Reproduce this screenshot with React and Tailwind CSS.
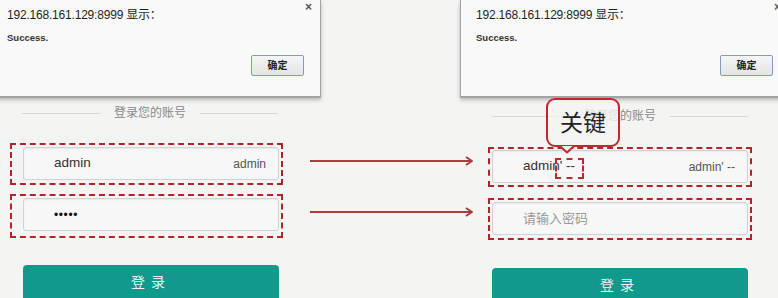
import React from "react";

const FONT = { fontFamily: '"Liberation Sans", "Noto Sans CJK SC", sans-serif' };

function Dialog({ className }) {
  return (
    <div
      className={
        "absolute top-0 w-[330px] h-[98px] bg-[#f9f9f9] border border-t-0 border-b-2 border-[#a3a3a3] shadow-[0_2px_4px_rgba(0,0,0,0.25)] " +
        className
      }
    >
      <div className="flex justify-between pl-[15px] pr-[8px]">
        <div className="pt-[7px] text-[12px] leading-[16px] text-[#1e1e1e] tracking-[-0.2px]">
          192.168.161.129:8999 显示：
        </div>
        <div className="pt-[1px] text-[12px] font-bold text-[#555] leading-[12px]">×</div>
      </div>
      <div className="pl-[15px] pt-[9px] text-[9.5px] leading-[12px] font-semibold text-[#333]">Success.</div>
      <div className="flex justify-end pr-[16px] pt-[11px]">
        <div className="w-[53px] h-[21px] flex items-center justify-center rounded-[2px] border border-[#7f9dc4] bg-gradient-to-b from-[#f6f6f6] to-[#e4e4e4] text-[10px] font-bold text-[#222]">
          确定
        </div>
      </div>
    </div>
  );
}

function Separator({ w }) {
  return (
    <div className={"flex items-center h-[16px] gap-[14px] " + w}>
      <div className="flex-1 h-px bg-[#d6d6d6]" />
      <div className="text-[12px] text-[#8a8a8a] leading-[16px]">登录您的账号</div>
      <div className="flex-1 h-px bg-[#d6d6d6]" />
    </div>
  );
}

function Input({ children, right }) {
  return (
    <div className="h-[33px] w-[256px] rounded-[3px] border border-[#d2d2d2] bg-[#f7f7f7] shadow-[inset_0_1px_2px_rgba(0,0,0,0.06)] flex items-center justify-between pl-[30px] pr-[12px]">
      {children}
      {right ? <span className="text-[12px] text-[#555]">{right}</span> : null}
    </div>
  );
}

function LoginButton() {
  return (
    <div className="h-[40px] w-[256px] rounded-[4px] bg-[#0f9a8b] flex items-start justify-center pt-[7px] text-[14px] tracking-[6px] text-[#e8f6f3]">
      登录
    </div>
  );
}

export default function App() {
  return (
    <div
      className="relative w-[778px] h-[298px] overflow-hidden bg-[#f4f4f2]"
      style={FONT}
    >
      <div className="flex">
        {/* left column */}
        <div className="w-[300px] pt-[105px] pl-[10px]">
          <div className="pl-[12px]">
            <Separator w="w-[256px]" />
          </div>
          <div className="mt-[22px] w-[273px] border-2 border-dashed border-[#b3242a] pl-[11px] pr-[2px] pt-[2px] pb-[3px]">
            <Input right="admin">
              <span className="text-[13.5px] text-[#333]">admin</span>
            </Input>
          </div>
          <div className="mt-[9px] w-[273px] border-2 border-dashed border-[#b3242a] pl-[11px] pr-[2px] pt-[2px] pb-[5px]">
            <Input>
              <span className="text-[12px] tracking-[0.6px] text-[#111]">•••••</span>
            </Input>
          </div>
          <div className="mt-[27px] pl-[13px]">
            <LoginButton />
          </div>
        </div>

        {/* middle column: arrows */}
        <div className="w-[180px] pt-[155px] pl-[10px]">
          <svg width="165" height="62" viewBox="0 0 165 62" fill="none" stroke="#b03a3a" strokeWidth="2">
            <line x1="0" y1="6" x2="162" y2="6" />
            <polyline points="156,2 162,6 156,10" strokeLinejoin="round" />
            <line x1="0" y1="57" x2="162" y2="57" />
            <polyline points="156,53 162,57 156,61" strokeLinejoin="round" />
          </svg>
        </div>

        {/* right column */}
        <div className="flex-1 pt-[108px]">
          <div className="pl-[12px]">
            <Separator w="w-[256px]" />
          </div>
          <div className="mt-[23px] ml-[8px] w-[264px] border-2 border-dashed border-[#b3242a] px-[2px] pt-[1px] pb-[2px]">
            <Input right="admin' --">
              <span className="text-[13.5px] text-[#333]">admin' --</span>
            </Input>
          </div>
          <div className="mt-[11px] ml-[8px] w-[264px] border-2 border-dashed border-[#b3242a] px-[2px] pt-[2px] pb-[3px]">
            <Input>
              <span className="text-[13px] text-[#9a9a9a]">请输入密码</span>
            </Input>
          </div>
          <div className="mt-[28px] pl-[12px]">
            <LoginButton />
          </div>
        </div>
      </div>

      {/* alert dialogs (overlays) */}
      <Dialog className="left-[-9px]" />
      <Dialog className="left-[460px]" />

      {/* annotation callout */}
      <div className="absolute left-[546px] top-[98px] w-[74px] h-[49px] rounded-[9px] border-2 border-[#c0282e] bg-[#f4f4f2]/80 flex items-center justify-center">
        <span className="text-[23px] leading-none text-[#222] pb-[2px]" style={{ fontFamily: '"Noto Sans CJK SC", sans-serif' }}>
          关键
        </span>
      </div>
      <svg className="absolute left-[559px] top-[145px]" width="16" height="9" viewBox="0 0 16 9">
        <polygon points="1,1 15,1 8,7.5" fill="#f4f4f2" />
        <polyline points="1,1 8,7.5 15,1" fill="none" stroke="#c0282e" strokeWidth="2" strokeLinejoin="round" />
      </svg>
      <div className="absolute left-[555px] top-[158px] w-[29px] h-[21px] border-2 border-dashed border-[#c0282e]" />
    </div>
  );
}
